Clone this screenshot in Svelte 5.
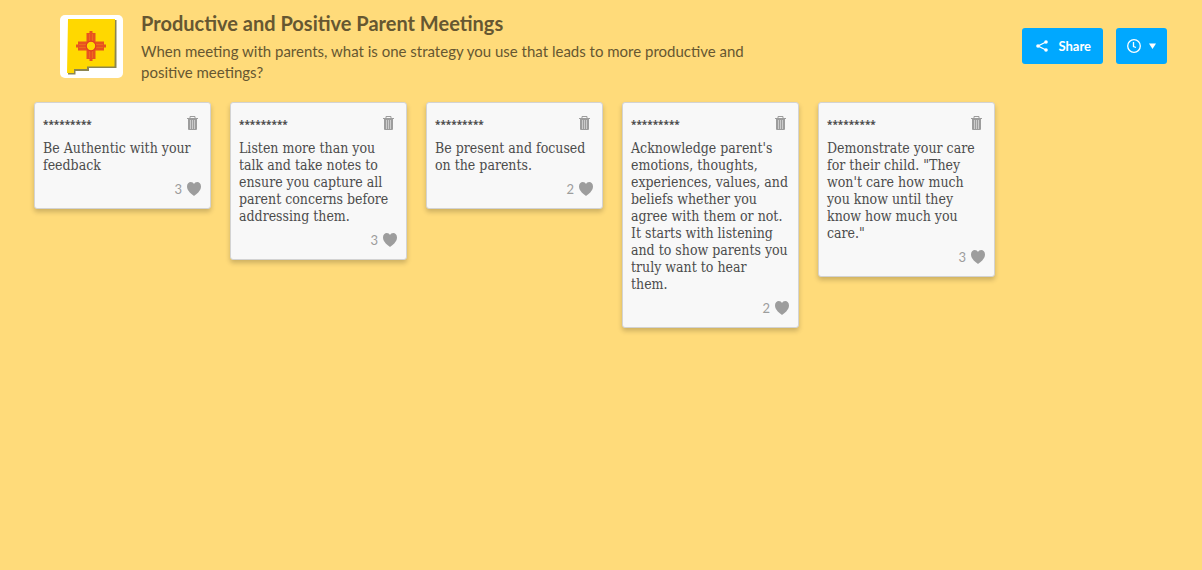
<script lang="ts">
  type Post = { author: string; body: string; likes: number };

  let posts = $state<Post[]>([
    { author: '*********', body: 'Be Authentic with your feedback', likes: 3 },
    { author: '*********', body: 'Listen more than you talk and take notes to ensure you capture all parent concerns before addressing them.', likes: 3 },
    { author: '*********', body: 'Be present and focused on the parents.', likes: 2 },
    { author: '*********', body: "Acknowledge parent's emotions, thoughts, experiences, values, and beliefs whether you agree with them or not. It starts with listening and to show parents you truly want to hear\nthem.", likes: 2 },
    { author: '*********', body: 'Demonstrate your care for their child. "They won\'t care how much you know until they know how much you care."', likes: 3 }
  ]);

  function like(post: Post) {
    post.likes += 1;
  }

  function remove(index: number) {
    posts.splice(index, 1);
  }
</script>

<header class="topbar">
  <div class="logo">
    <svg viewBox="0 0 63 63" role="img" aria-label="New Mexico">
      <path d="M10 5 H56.500 V53 H29 V56 H15.500 V59.500 H8 Z" fill="#8b8550" />
      <path d="M8 4 H55 L54.500 51.500 H27 V54 H14 V58 H7 Z" fill="#ffd800" />
      <path d="M29.500 16 H32.500 V18 H35.500 V26.500 H44 V29.500 H46 V32.500 H44 V35.500 H35.500 V44 H32.500 V46 H29.500 V44 H26.500 V35.500 H18 V32.500 H16 V29.500 H18 V26.500 H26.500 V18 H29.500 Z" fill="#e8531f" />
      <path d="M29.500 19 V26 M32.500 19 V26 M29.500 36 V43 M32.500 36 V43 M19 29.500 H26 M19 32.500 H26 M36 29.500 H43 M36 32.500 H43" stroke="#f0801a" stroke-width="0.600" />
      <circle cx="31" cy="31" r="4.800" fill="#ffd800" stroke="#e23b22" stroke-width="1.200" />
    </svg>
  </div>
  <div class="heading">
    <h1>Productive and Positive Parent Meetings</h1>
    <p>When meeting with parents, what is one strategy you use that leads to more productive and positive meetings?</p>
  </div>
  <div class="actions">
    <button class="action share">
      <svg width="12" height="12" viewBox="0 0 12 12" aria-hidden="true">
        <path d="M10 2 L2 6 L10 10" fill="none" stroke="#fff" stroke-width="1.300" />
        <circle cx="10" cy="2" r="1.800" fill="#fff" />
        <circle cx="2" cy="6" r="1.800" fill="#fff" />
        <circle cx="10" cy="10" r="1.800" fill="#fff" />
      </svg>
      Share
    </button>
    <button class="action history" aria-label="History">
      <svg width="14" height="14" viewBox="0 0 14 14" aria-hidden="true">
        <circle cx="7" cy="7" r="6.300" fill="none" stroke="#fff" stroke-width="1.300" />
        <path d="M6.500 3 V7.500 L9 8.500" fill="none" stroke="#fff" stroke-width="1.300" />
      </svg>
      <svg width="7" height="6" viewBox="0 0 7 6" aria-hidden="true">
        <path d="M0 0.500 H7 L3.500 6 Z" fill="#fff" />
      </svg>
    </button>
  </div>
</header>

<main class="board">
  {#each posts as post, i}
    <article class="post">
      <div class="post-head">
        <span class="author">{post.author}</span>
        <button class="icon-button" aria-label="Delete post" onclick={() => remove(i)}>
          <svg width="11" height="14" viewBox="0 0 11 14" aria-hidden="true">
            <path d="M3 2 V0.500 H8 V2" fill="none" stroke="#9d9d9d" />
            <path d="M0 2 H11 V3 H0 Z M1 3 H10 V13 Q10 14 9 14 H2 Q1 14 1 13 Z" fill="#9d9d9d" />
            <path d="M3.500 4 V13 M5.500 4 V13 M7.500 4 V13" stroke="#d8d8d8" stroke-width="0.800" />
          </svg>
        </button>
      </div>
      <p class="body">{post.body}</p>
      <div class="post-foot">
        <span class="count">{post.likes}</span>
        <button class="icon-button" aria-label="Like post" onclick={() => like(post)}>
          <svg width="14" height="14" viewBox="0 0 14 14" aria-hidden="true">
            <path d="M7 14 C5 12.500 0 9 0 4.500 C0 1.500 1.800 0 3.800 0 C5.300 0 6.400 0.700 7 2 C7.600 0.700 8.700 0 10.200 0 C12.200 0 14 1.500 14 4.500 C14 9 9 12.500 7 14 Z" fill="#9d9d9d" />
          </svg>
        </button>
      </div>
    </article>
  {/each}
</main>

<style>
  :global(body) {
    margin: 0;
    background: #ffdb7a;
  }

  .topbar {
    display: flex;
    align-items: flex-start;
    padding: 10px 35px 0 60px;
  }

  .logo {
    flex: none;
    width: 63px;
    height: 63px;
    margin: 5px 18px 0 0;
    border-radius: 5px;
    background: #fff;
  }

  .logo svg {
    display: block;
  }

  .heading {
    max-width: 620px;
    color: #665731;
    font-family: Lato, sans-serif;
  }

  h1 {
    margin: 0 0 4px;
    font-size: 20px;
    line-height: 27px;
    font-weight: 700;
  }

  .heading p {
    margin: 0;
    font-size: 15px;
    line-height: 21px;
  }

  .actions {
    display: flex;
    gap: 13px;
    margin: 18px 0 0 auto;
  }

  .action {
    display: flex;
    align-items: center;
    height: 36px;
    border: none;
    border-radius: 3px;
    background: #00a8ff;
    color: #fff;
    font: 700 13px/18px Lato, sans-serif;
    cursor: pointer;
  }

  .share {
    gap: 10px;
    padding: 0 12px 0 14px;
  }

  .history {
    gap: 8px;
    padding: 0 11px;
  }

  .board {
    display: grid;
    grid-template-columns: repeat(auto-fill, 177px);
    align-items: start;
    gap: 19px;
    padding: 19px 34px;
  }

  .post {
    box-sizing: border-box;
    padding: 13px 9px 12px 8px;
    border: 1px solid #d3d3d3;
    border-radius: 3px;
    background: #f8f8f8;
    box-shadow: 0 3px 5px rgba(0, 0, 0, 0.2);
    color: #4c4c4c;
  }

  .post-head,
  .post-foot {
    display: flex;
    align-items: center;
  }

  .post-head {
    justify-content: space-between;
    height: 14px;
    padding-right: 3px;
  }

  .author {
    padding-top: 2px;
    font: 700 10px/14px "Noto Sans", sans-serif;
  }

  .body {
    margin: 10px 0 8px;
    font: 14px/17px "DejaVu Serif Condensed", "DejaVu Serif", serif;
    white-space: pre-line;
  }

  .post-foot {
    justify-content: flex-end;
    gap: 5px;
    height: 14px;
  }

  .count {
    color: #9d9d9d;
    font: 13px/14px Lato, sans-serif;
  }

  .icon-button {
    display: block;
    padding: 0;
    border: none;
    background: none;
    cursor: pointer;
  }

  .icon-button svg {
    display: block;
  }
</style>
